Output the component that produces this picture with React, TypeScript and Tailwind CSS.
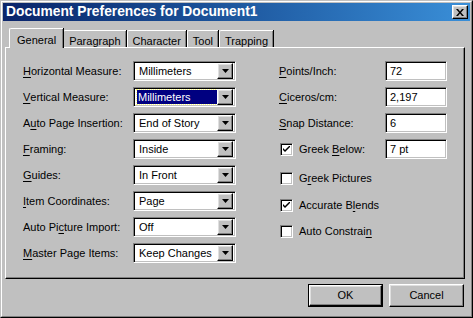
import React from 'react';

// accelerator letter
const U = ({ children }: { children: React.ReactNode }) => <span className="underline underline-offset-2">{children}</span>;

const sunken =
  'border border-t-[#808080] border-l-[#808080] border-b-white border-r-white shadow-[inset_1px_1px_0_#000,inset_-1px_-1px_0_#c0c0c0]';
const raised =
  'border border-t-white border-l-white border-b-black border-r-black shadow-[inset_-1px_-1px_0_#808080,inset_1px_1px_0_#dfdfdf]';

const DropArrow = () => (
  <div className={`flex h-[16px] w-[16px] items-center justify-center bg-[#c0c0c0] ${raised}`}>
    <svg width="7" height="4" viewBox="0 0 7 4">
      <path d="M0 0h7L3.5 4z" fill="#000" />
    </svg>
  </div>
);

const Combo = ({ value, selected }: { value: string; selected?: boolean }) => (
  <div className={`flex h-[20px] w-[103px] items-center bg-white p-[2px] ${sunken}`}>
    <div className="flex h-full flex-1 items-center pl-[1px]">
      {selected ? (
        <span className="flex h-full w-full items-center bg-[#000080] pl-[1px] text-white outline-1 outline-dotted outline-[#ffff80]">
          {value}
        </span>
      ) : (
        <span className="pl-[2px]">{value}</span>
      )}
    </div>
    <DropArrow />
  </div>
);

const Field = ({ value }: { value: string }) => (
  <div className={`flex h-[20px] w-[62px] items-center bg-white pl-[4px] ${sunken}`}>{value}</div>
);

const Check = ({ checked }: { checked?: boolean }) => (
  <div className={`flex h-[13px] w-[13px] items-center justify-center bg-white ${sunken}`}>
    {checked && (
      <svg width="7" height="7" viewBox="0 0 7 7">
        <path d="M0 2l2 2 5-5v2l-5 5-2-2z" fill="#000" />
      </svg>
    )}
  </div>
);

const leftRows: [React.ReactNode, string, boolean?][] = [
  [<><U>H</U>orizontal Measure:</>, 'Millimeters'],
  [<><U>V</U>ertical Measure:</>, 'Millimeters', true],
  [<>A<U>u</U>to Page Insertion:</>, 'End of Story'],
  [<><U>F</U>raming:</>, 'Inside'],
  [<><U>G</U>uides:</>, 'In Front'],
  [<><U>I</U>tem Coordinates:</>, 'Page'],
  [<>Auto Pi<U>c</U>ture Import:</>, 'Off'],
  [<><U>M</U>aster Page Items:</>, 'Keep Changes'],
];

const tabs = ['General', 'Paragraph', 'Character', 'Tool', 'Trapping'];

export default function App() {
  return (
    <div className="h-[318px] w-[473px] bg-[#c0c0c0] text-[11px] text-black [font-family:'Liberation_Sans',Arial,sans-serif]">
      <div className="flex h-full w-full flex-col border border-t-[#c0c0c0] border-l-[#c0c0c0] border-b-black border-r-black">
        <div className="flex h-full w-full flex-col border border-t-white border-l-white border-b-[#808080] border-r-[#808080] p-[1px]">
          {/* title bar */}
          <div className="flex h-[18px] items-center bg-gradient-to-r from-[#0a246a] to-[#3a8fd8] pl-[3px] pr-[2px]">
            <span className="flex-1 text-[13.8px] font-bold text-white">Document Preferences for Document1</span>
            <div className={`flex h-[14px] w-[16px] items-center justify-center bg-[#c0c0c0] ${raised}`}>
              <svg width="8" height="7" viewBox="0 0 8 7">
                <path d="M0 0h2l2 2.5L6 0h2L5 3.5 8 7H6L4 4.5 2 7H0l3-3.5z" fill="#000" />
              </svg>
            </div>
          </div>

          {/* tabs */}
          <div className="mt-[7px] flex items-end pl-[6px]">
            {tabs.map((t, i) => (
              <div
                key={t}
                className={
                  i === 0
                    ? 'relative z-10 -mb-[1px] flex h-[20px] items-start border-l border-t border-white bg-[#c0c0c0] px-[7px] pt-[3px] shadow-[inset_-1px_0_0_#808080,1px_0_0_#000] rounded-tl-[2px]'
                    : 'flex h-[17px] items-start border-l border-t border-white bg-[#c0c0c0] px-[5px] pt-[2px] shadow-[inset_-1px_0_0_#808080,1px_0_0_#000] mr-[1px] rounded-tl-[2px]'
                }
              >
                {t}
              </div>
            ))}
          </div>

          {/* panel */}
          <div className="mr-[5px] ml-[2px] h-[232px] border border-t-white border-l-white border-b-black border-r-black shadow-[inset_-1px_-1px_0_#808080]">
            <div className="flex pl-[17px] pt-[13px]">
              <div className="grid grid-cols-[110px_103px] gap-y-[6px]">
                {leftRows.map(([label, value, sel], i) => (
                  <React.Fragment key={i}>
                    <div className="flex h-[20px] items-center">{label}</div>
                    <Combo value={value} selected={sel} />
                  </React.Fragment>
                ))}
              </div>

              <div className="ml-[43px] flex flex-col">
                <div className="grid grid-cols-[106px_62px] gap-y-[6px]">
                  <div className="flex h-[20px] items-center"><U>P</U>oints/Inch:</div>
                  <Field value="72" />
                  <div className="flex h-[20px] items-center"><U>C</U>iceros/cm:</div>
                  <Field value="2,197" />
                  <div className="flex h-[20px] items-center"><U>S</U>nap Distance:</div>
                  <Field value="6" />
                  <div className="flex h-[20px] items-center gap-[6px] pl-[1px]">
                    <Check checked />
                    <span>Greek <U>B</U>elow:</span>
                  </div>
                  <Field value="7 pt" />
                </div>
                <div className="mt-[13px] flex flex-col gap-[13.5px] pl-[1px]">
                  <div className="flex h-[13px] items-center gap-[6px]">
                    <Check />
                    <span>G<U>r</U>eek Pictures</span>
                  </div>
                  <div className="flex h-[13px] items-center gap-[6px]">
                    <Check checked />
                    <span>Accurate B<U>l</U>ends</span>
                  </div>
                  <div className="flex h-[13px] items-center gap-[6px]">
                    <Check />
                    <span>Auto Constrai<U>n</U></span>
                  </div>
                </div>
              </div>
            </div>
          </div>

          {/* buttons */}
          <div className="mt-[5px] flex justify-end gap-[6px] pr-[6px]">
            <div className="border border-black">
              <div className={`flex h-[21px] w-[73px] items-center justify-center bg-[#c0c0c0] ${raised}`}>OK</div>
            </div>
            <div className={`flex h-[23px] w-[75px] items-center justify-center bg-[#c0c0c0] ${raised}`}>Cancel</div>
          </div>
        </div>
      </div>
    </div>
  );
}
